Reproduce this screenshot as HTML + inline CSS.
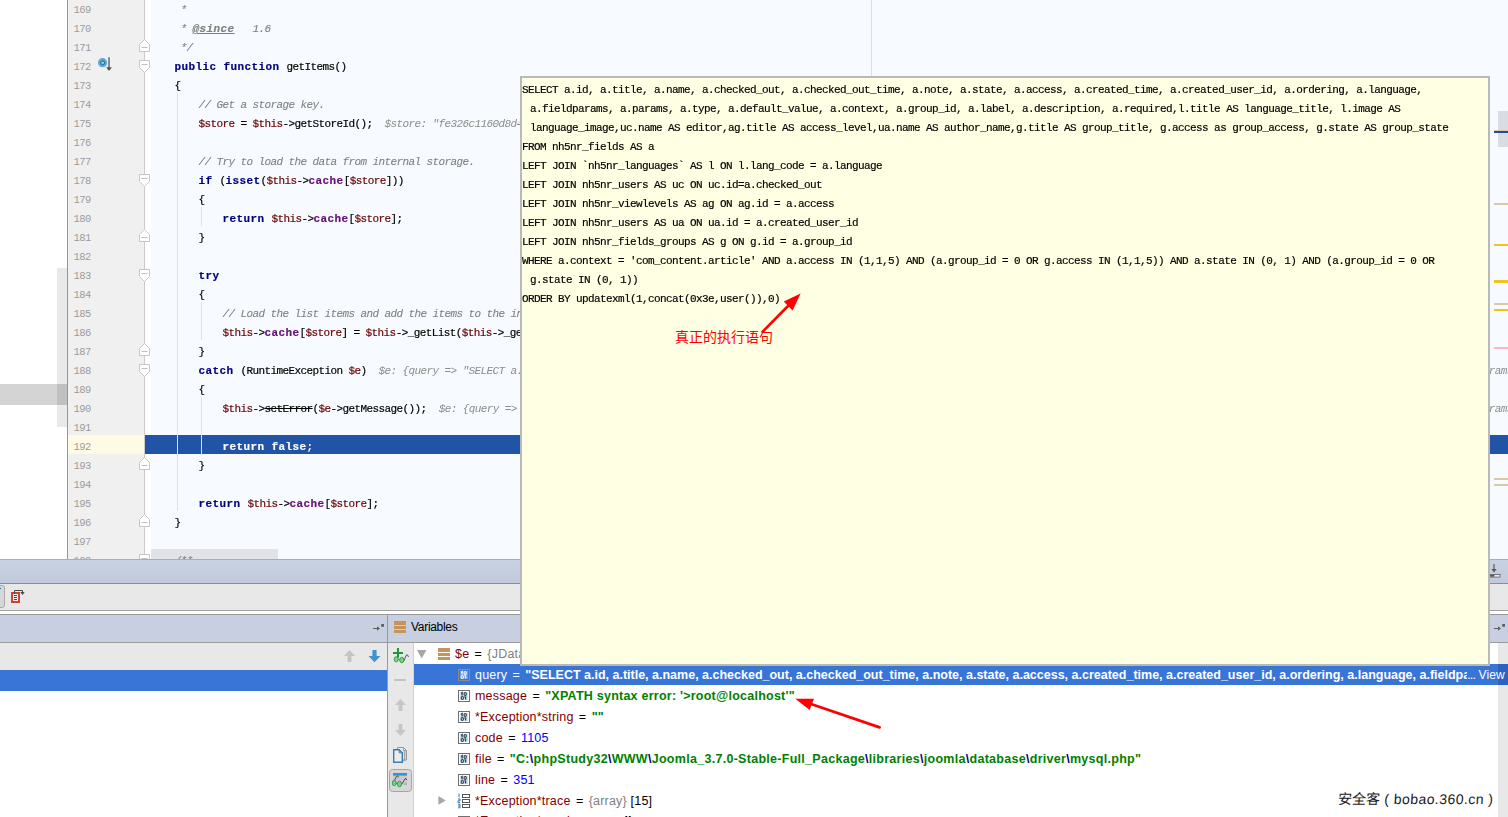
<!DOCTYPE html>
<html lang="zh">
<head>
<meta charset="utf-8">
<title>getItems() - debug</title>
<style>
html,body{margin:0;padding:0;}
body{width:1508px;height:817px;overflow:hidden;position:relative;background:#fff;font-family:"Liberation Sans","Noto Sans CJK SC",sans-serif;font-size:12px;color:#000;}
div,span,svg{box-sizing:border-box;}
.abs{position:absolute;}
/* ---------- editor ---------- */
#editor{position:absolute;left:0;top:0;width:1508px;height:559px;overflow:hidden;background:#fff;}
#edbg{position:absolute;left:151px;top:0;width:1357px;height:559px;background:#f7fafe;}
#lstrip1{position:absolute;left:57px;top:268px;width:10px;height:159px;background:#e9e9e9;}
#lstrip2{position:absolute;left:0;top:384px;width:67px;height:21px;background:#d4d4d4;}
#lstrip3{position:absolute;left:57px;top:384px;width:10px;height:21px;background:#c0c0c0;}
#gutter{position:absolute;left:67px;top:0;width:78px;height:559px;background:#f0f0f0;border-left:1px solid #969696;border-right:1px solid #cbcbcb;}
#gut192{position:absolute;left:68px;top:435px;width:76px;height:19px;background:#fffae3;}
#hl192{position:absolute;left:145px;top:435px;width:1363px;height:19px;background:#2154a6;}
#margin{position:absolute;left:871px;top:0;width:1px;height:559px;background:#dfdfdf;}
.ln{position:absolute;left:73.6px;width:30px;height:19px;line-height:19px;font-family:"Liberation Mono",monospace;font-size:10.5px;letter-spacing:-0.6px;color:#9c9c9c;}
.cl{filter:contrast(1);-webkit-text-stroke:0.18px;position:absolute;left:150.5px;height:19px;line-height:19px;white-space:pre;font-family:"Liberation Mono",monospace;font-size:11px;letter-spacing:-0.6px;color:#000;}
.k{font-weight:bold;color:#000080;letter-spacing:0.4px;}
.kw{font-weight:bold;color:#fff;letter-spacing:0.4px;}
.w{color:#fff;}
.v{color:#660000;}
.f{font-weight:bold;color:#660e7a;letter-spacing:0.4px;}
.c{font-style:italic;color:#808080;-webkit-text-stroke:0.1px;}
.h{font-style:italic;color:#8c8c8c;-webkit-text-stroke:0;}
.t{font-weight:bold;font-style:italic;text-decoration:underline;color:#808080;letter-spacing:0.4px;}
.s{text-decoration:line-through;}
.guide{position:absolute;width:1px;background:#e2e2e2;}
.stripe{position:absolute;left:1494px;width:14px;height:2px;}
#hthumb{position:absolute;left:151px;top:549px;width:127px;height:10px;background:#e1e3e8;}
#vthumb{position:absolute;left:1498px;top:111px;width:10px;height:36px;background:#d9dce3;}
/* ---------- tooltip ---------- */
#tip{position:absolute;left:520px;top:76px;width:970px;height:590px;background:#ffffe3;border:2px solid #b9b9b9;overflow:hidden;}
.q{filter:contrast(1);-webkit-text-stroke:0.18px;position:absolute;left:0px;height:19px;line-height:19px;white-space:pre;font-family:"Liberation Mono",monospace;font-size:11px;letter-spacing:-0.6px;color:#000;}
#cn{position:absolute;left:153px;top:250px;font-family:"Liberation Sans","Noto Sans CJK SC",sans-serif;font-size:14px;line-height:18px;color:#ff0000;white-space:nowrap;}
/* ---------- bottom ---------- */
#bar1{position:absolute;left:0;top:559px;width:1508px;height:25px;background:linear-gradient(#c9d2e3,#c1cadc);border-top:1px solid #a9adb6;border-bottom:1px solid #878c98;}
#bar2{position:absolute;left:0;top:584px;width:1508px;height:27px;background:#e8e8e8;border-bottom:1px solid #a0a0a0;}
#bar3{position:absolute;left:0;top:611px;width:1508px;height:3px;background:#fff;}
#hdr{position:absolute;left:0;top:614px;width:1508px;height:29px;background:#c7cfe0;border-top:1px solid #9a9a9a;border-bottom:1px solid #9a9a9a;}
#vdiv{position:absolute;left:387px;top:615px;width:1px;height:202px;background:#999;}
#ltool{position:absolute;left:0;top:643px;width:387px;height:27px;background:#e8e8e8;}
#lsel{position:absolute;left:0;top:670px;width:387px;height:21px;background:#3875d7;}
#rtool{position:absolute;left:388px;top:643px;width:26px;height:174px;background:#e8e8e8;border-right:1px solid #d0d0d0;}
#rsel{position:absolute;left:414px;top:664px;width:1094px;height:21px;background:#3875d7;}
#rscroll{position:absolute;left:1498px;top:643px;width:10px;height:174px;background:#e8e8e8;}
#rscrollsel{position:absolute;left:1498px;top:664px;width:10px;height:21px;background:#2f62c0;}
.row{position:absolute;left:475px;height:21px;line-height:21px;margin-top:1px;white-space:pre;font-size:12.5px;letter-spacing:0.2px;color:#000;}
.n{color:#800000;}
.eq{word-spacing:1.6px;}
.g{color:#808080;}
.str{color:#008000;font-weight:bold;letter-spacing:0.27px;}
.esc{color:#000080;font-weight:bold;}
.num{color:#0000ff;}
.sel,.sel span{color:#fff;}
.sel b{letter-spacing:0.27px;}
#wm{position:absolute;left:1338px;top:789px;font-family:"Liberation Sans","Noto Sans CJK SC",sans-serif;font-size:14px;line-height:20px;color:#1a1a1a;white-space:nowrap;text-shadow:-1px -1px 0 #fff;transform:skewX(-4deg);transform-origin:0 50%;}
#wml{letter-spacing:0.45px;}
</style>
</head>
<body>
<div id="editor">
<div id="edbg"></div>
<div id="lstrip1"></div><div id="lstrip2"></div><div id="lstrip3"></div>
<div id="margin"></div>
<div id="gutter"></div>
<div id="gut192"></div>
<div id="hl192"></div>
<div class="guide" style="left:177px;top:93px;height:418px"></div>
<div class="guide" style="left:201px;top:207px;height:19px"></div>
<div class="guide" style="left:201px;top:302px;height:38px"></div>
<div class="guide" style="left:201px;top:397px;height:57px"></div>
<div id="hthumb"></div>
<div class="ln" style="top:1px">169</div>
<div class="ln" style="top:20px">170</div>
<div class="ln" style="top:39px">171</div>
<div class="ln" style="top:58px">172</div>
<div class="ln" style="top:77px">173</div>
<div class="ln" style="top:96px">174</div>
<div class="ln" style="top:115px">175</div>
<div class="ln" style="top:134px">176</div>
<div class="ln" style="top:153px">177</div>
<div class="ln" style="top:172px">178</div>
<div class="ln" style="top:191px">179</div>
<div class="ln" style="top:210px">180</div>
<div class="ln" style="top:229px">181</div>
<div class="ln" style="top:248px">182</div>
<div class="ln" style="top:267px">183</div>
<div class="ln" style="top:286px">184</div>
<div class="ln" style="top:305px">185</div>
<div class="ln" style="top:324px">186</div>
<div class="ln" style="top:343px">187</div>
<div class="ln" style="top:362px">188</div>
<div class="ln" style="top:381px">189</div>
<div class="ln" style="top:400px">190</div>
<div class="ln" style="top:419px">191</div>
<div class="ln" style="top:438px">192</div>
<div class="ln" style="top:457px">193</div>
<div class="ln" style="top:476px">194</div>
<div class="ln" style="top:495px">195</div>
<div class="ln" style="top:514px">196</div>
<div class="ln" style="top:533px">197</div>
<div class="ln" style="top:552px">198</div>
<div class="cl" style="top:1px">     <span class="c">*</span></div>
<div class="cl" style="top:20px">     <span class="c">* </span><span class="t">@since</span><span class="c">   1.6</span></div>
<div class="cl" style="top:39px">     <span class="c">*/</span></div>
<div class="cl" style="top:58px">    <span class="k">public function </span>getItems()</div>
<div class="cl" style="top:77px">    {</div>
<div class="cl" style="top:96px">        <span class="c">// Get a storage key.</span></div>
<div class="cl" style="top:115px">        <span class="v">$store</span> = <span class="v">$this</span>-&gt;getStoreId();  <span class="h">$store: "fe326c1160d8d4f5c8a1e6b2d7a90c43"</span></div>
<div class="cl" style="top:153px">        <span class="c">// Try to load the data from internal storage.</span></div>
<div class="cl" style="top:172px">        <span class="k">if </span>(<span class="k">isset</span>(<span class="v">$this</span>-&gt;<span class="f">cache</span>[<span class="v">$store</span>]))</div>
<div class="cl" style="top:191px">        {</div>
<div class="cl" style="top:210px">            <span class="k">return </span><span class="v">$this</span>-&gt;<span class="f">cache</span>[<span class="v">$store</span>];</div>
<div class="cl" style="top:229px">        }</div>
<div class="cl" style="top:267px">        <span class="k">try</span></div>
<div class="cl" style="top:286px">        {</div>
<div class="cl" style="top:305px">            <span class="c">// Load the list items and add the items to the internal cache.</span></div>
<div class="cl" style="top:324px">            <span class="v">$this</span>-&gt;<span class="f">cache</span>[<span class="v">$store</span>] = <span class="v">$this</span>-&gt;_getList(<span class="v">$this</span>-&gt;_getListQuery(), <span class="v">$this</span>-&gt;getStart(), <span class="v">$this</span>-&gt;getState('list.limit'));</div>
<div class="cl" style="top:343px">        }</div>
<div class="cl" style="top:362px">        <span class="k">catch </span>(RuntimeException <span class="v">$e</span>)  <span class="h">$e: {query =&gt; "SELECT a.id, a.title, a.name, a.checked_out, a.checked_out_time, a.note, a.state, a.access, a.created_time, a.created_user_id, a.ordering, a.language, a.fieldparams, a.params, a.type, a.default_value, a.fieldparams, a.param</span></div>
<div class="cl" style="top:381px">        {</div>
<div class="cl" style="top:400px">            <span class="v">$this</span>-&gt;<span class="s">setError</span>(<span class="v">$e</span>-&gt;getMessage());  <span class="h">$e: {query =&gt; "SELECT a.id, a.title, a.name, a.checked_out, a.checked_out_time, a.note, a.state, a.access, a.created_time, a.created_user_id, a.ordering, a.language, a.fieldparams, a.param</span></div>
<div class="cl" style="top:438px">            <span class="kw">return false</span><span class="w">;</span></div>
<div class="cl" style="top:457px">        }</div>
<div class="cl" style="top:495px">        <span class="k">return </span><span class="v">$this</span>-&gt;<span class="f">cache</span>[<span class="v">$store</span>];</div>
<div class="cl" style="top:514px">    }</div>
<div class="cl" style="top:552px">    <span class="c">/**</span></div>
<svg class="abs" style="left:139px;top:39px" width="11" height="13" viewBox="0 0 11 13"><path d="M0.5 12.5V5.5L5.5 0.5L10.5 5.5V12.5Z" fill="#fff" stroke="#c6c6c6"/><path d="M2.5 8.5H8.5" stroke="#c0c0c0"/></svg>
<svg class="abs" style="left:139px;top:229px" width="11" height="13" viewBox="0 0 11 13"><path d="M0.5 12.5V5.5L5.5 0.5L10.5 5.5V12.5Z" fill="#fff" stroke="#c6c6c6"/><path d="M2.5 8.5H8.5" stroke="#c0c0c0"/></svg>
<svg class="abs" style="left:139px;top:343px" width="11" height="13" viewBox="0 0 11 13"><path d="M0.5 12.5V5.5L5.5 0.5L10.5 5.5V12.5Z" fill="#fff" stroke="#c6c6c6"/><path d="M2.5 8.5H8.5" stroke="#c0c0c0"/></svg>
<svg class="abs" style="left:139px;top:457px" width="11" height="13" viewBox="0 0 11 13"><path d="M0.5 12.5V5.5L5.5 0.5L10.5 5.5V12.5Z" fill="#fff" stroke="#c6c6c6"/><path d="M2.5 8.5H8.5" stroke="#c0c0c0"/></svg>
<svg class="abs" style="left:139px;top:514px" width="11" height="13" viewBox="0 0 11 13"><path d="M0.5 12.5V5.5L5.5 0.5L10.5 5.5V12.5Z" fill="#fff" stroke="#c6c6c6"/><path d="M2.5 8.5H8.5" stroke="#c0c0c0"/></svg>
<svg class="abs" style="left:139px;top:60px" width="11" height="13" viewBox="0 0 11 13"><path d="M0.5 0.5V7.5L5.5 12.5L10.5 7.5V0.5Z" fill="#fff" stroke="#c6c6c6"/><path d="M2.5 4.5H8.5" stroke="#c0c0c0"/></svg>
<svg class="abs" style="left:139px;top:174px" width="11" height="13" viewBox="0 0 11 13"><path d="M0.5 0.5V7.5L5.5 12.5L10.5 7.5V0.5Z" fill="#fff" stroke="#c6c6c6"/><path d="M2.5 4.5H8.5" stroke="#c0c0c0"/></svg>
<svg class="abs" style="left:139px;top:269px" width="11" height="13" viewBox="0 0 11 13"><path d="M0.5 0.5V7.5L5.5 12.5L10.5 7.5V0.5Z" fill="#fff" stroke="#c6c6c6"/><path d="M2.5 4.5H8.5" stroke="#c0c0c0"/></svg>
<svg class="abs" style="left:139px;top:364px" width="11" height="13" viewBox="0 0 11 13"><path d="M0.5 0.5V7.5L5.5 12.5L10.5 7.5V0.5Z" fill="#fff" stroke="#c6c6c6"/><path d="M2.5 4.5H8.5" stroke="#c0c0c0"/></svg>
<svg class="abs" style="left:139px;top:554px" width="11" height="13" viewBox="0 0 11 13"><path d="M0.5 0.5V7.5L5.5 12.5L10.5 7.5V0.5Z" fill="#fff" stroke="#c6c6c6"/><path d="M2.5 4.5H8.5" stroke="#c0c0c0"/></svg>
<div id="vthumb"></div>
<div class="stripe" style="top:130px;height:1px;background:#d9c9a6"></div>
<div class="stripe" style="top:131px;background:#1f4e9e"></div>
<div class="stripe" style="top:203px;background:#d9c9a6"></div>
<div class="stripe" style="top:244px;background:#f0c419"></div>
<div class="stripe" style="top:280px;height:3px;background:#f0c419"></div>
<div class="stripe" style="top:303px;background:#d9c9a6"></div>
<div class="stripe" style="top:309px;background:#f0c419"></div>
<div class="stripe" style="top:347px;background:#ffb6c1"></div>
<div class="stripe" style="top:478px;background:#d9c9a6"></div>
<div class="stripe" style="top:484px;background:#d9c9a6"></div>
</div>

<div id="bar1"></div>
<div id="bar2"></div>
<div id="bar3"></div>
<div id="hdr"></div>
<div id="ltool"></div>
<div id="lsel"></div>
<div id="rtool"></div>
<div id="rsel"></div>
<div id="rscroll"></div>
<div id="rscrollsel"></div>
<div id="vdiv"></div>
<div class="abs" id="vars" style="left:411px;top:617px;height:21px;line-height:21px;font-size:12px;letter-spacing:-0.3px;">Variables</div>
<svg class="abs" style="left:97px;top:56px" width="16" height="16" viewBox="0 0 16 16"><circle cx="5.6" cy="6.7" r="4.6" fill="#56abe0"/><circle cx="5.6" cy="6.8" r="1.4" fill="#8fd0f7"/><circle cx="5.6" cy="6.8" r="2" fill="none" stroke="#4a5f70" stroke-width="1"/><path d="M12 1.2V13" stroke="#555" stroke-width="1.3" fill="none"/><path d="M9.1 11.2L12 14.9L14.9 11.2Z" fill="#555"/></svg>
<svg class="abs" style="left:1488px;top:562.5px" width="14" height="16" viewBox="0 0 14 16"><path d="M6 1V8" stroke="#5a5a5a" stroke-width="1.2"/><path d="M3.4 6L6 9.4L8.6 6Z" fill="#5a5a5a"/><rect x="1" y="11.5" width="11" height="2.6" fill="#eee" stroke="#5a5a5a" stroke-width="0.8"/><rect x="1.4" y="11.9" width="5" height="1.8" fill="#5a5a5a"/></svg>
<div class="abs" style="left:-8px;top:585px;width:13px;height:23px;border:1px solid #a9a9a9;border-radius:3px;background:#d7d7d7;"></div>
<div class="abs" style="left:0;top:588px;width:1px;height:1px;background:#1a6fa8;"></div>
<svg class="abs" style="left:10px;top:588px" width="18" height="18" viewBox="0 0 18 18"><rect x="2" y="5" width="7" height="9" fill="#f3f3f3" stroke="#cb4334" stroke-width="2"/><path d="M4 7.5H7M4 9.5H7M4 11.5H7" stroke="#444" stroke-width="1"/><path d="M4.5 6V2.5H12.5V4.2" stroke="#4a4a4a" stroke-width="1" fill="none"/><rect x="3.4" y="4" width="2.2" height="2" fill="#e8e8e8" opacity="0"/><path d="M10.3 4L12.5 7L14.7 4Z" fill="#4a4a4a"/></svg>
<svg class="abs" style="left:372px;top:622px" width="13" height="11" viewBox="0 0 13 11"><path d="M1 6.5H7" stroke="#5f5f5f" stroke-width="1"/><path d="M5 4.2L8 6.5L5 8.8Z" fill="#5f5f5f"/><rect x="9.2" y="2" width="2.8" height="2.8" fill="#5f5f5f"/></svg>
<svg class="abs" style="left:1493px;top:622px" width="13" height="11" viewBox="0 0 13 11"><path d="M1 6.5H7" stroke="#5f5f5f" stroke-width="1"/><path d="M5 4.2L8 6.5L5 8.8Z" fill="#5f5f5f"/><rect x="9.2" y="2" width="2.8" height="2.8" fill="#5f5f5f"/></svg>
<svg class="abs" style="left:343px;top:649px" width="13" height="14" viewBox="0 0 13 14"><path d="M6.5 1L12 7H8.4V13H4.6V7H1Z" fill="#c3c3c3"/></svg>
<svg class="abs" style="left:367.6px;top:649px" width="14" height="14" viewBox="0 0 14 14"><path d="M6.5 13.2L12.5 7H8.6V1H4.4V7H0.5Z" fill="#3d94d1"/></svg>
<svg class="abs" style="left:394px;top:621px" width="12" height="13" viewBox="0 0 12 13"><rect x="0" y="0" width="12" height="4" fill="#c4955a"/><rect x="0" y="5" width="12" height="3" fill="#c4955a"/><rect x="0" y="9" width="12" height="3" fill="#c4955a"/></svg>
<svg class="abs" style="left:392px;top:647px" width="18" height="18" viewBox="0 0 18 18"><path d="M6 1V10.8M1 6H11" stroke="#1c9636" stroke-width="2"/><ellipse cx="4.2" cy="12.3" rx="2" ry="2.6" fill="#7fd08a" stroke="#2a9a44" stroke-width="0.9"/><ellipse cx="9.8" cy="13" rx="2.1" ry="2.8" fill="#7fd08a" stroke="#2a9a44" stroke-width="0.9"/><path d="M6.2 12.6H7.6" stroke="#2a9a44" stroke-width="1"/><path d="M12.1 13.6L14.2 8.2Q15.6 6.6 16.5 10" stroke="#4a4a4a" stroke-width="0.9" fill="none"/></svg>
<div class="abs" style="left:394px;top:679px;width:12px;height:2px;background:#c4c4c4;"></div>
<svg class="abs" style="left:394px;top:698px" width="13" height="14" viewBox="0 0 13 14"><path d="M6.5 1L12 7H8.4V13H4.6V7H1Z" fill="#c6c6c6"/></svg>
<svg class="abs" style="left:394px;top:723px" width="13" height="14" viewBox="0 0 13 14"><path d="M6.5 13L12 7H8.4V1H4.6V7H1Z" fill="#c6c6c6"/></svg>
<svg class="abs" style="left:392px;top:746px" width="17" height="18" viewBox="0 0 17 18"><path d="M5.5 1.5H11.5L14.5 4.5V14H5.5Z" fill="#ededed" stroke="#9a9a9a" stroke-width="1"/><path d="M11.5 1.5V4.5H14.5" fill="none" stroke="#9a9a9a" stroke-width="1"/><path d="M12.6 5V14.4H10.6" fill="none" stroke="#a8a8a8" stroke-width="1.6"/><path d="M1.7 3.7H7.2L10.3 6.8V16.3H1.7Z" fill="#ececec" stroke="#3a7db1" stroke-width="1.4"/><path d="M7.2 3.7V6.8H10.3" fill="none" stroke="#3a7db1" stroke-width="1"/></svg>
<div class="abs" style="left:389px;top:769px;width:23px;height:23px;border:1px solid #a6a6a6;border-radius:3.5px;background:#d6d6d6;"></div>
<svg class="abs" style="left:391px;top:771px" width="18" height="18" viewBox="0 0 18 18"><rect x="2" y="4.4" width="14" height="9.6" fill="#c9c9c9"/><rect x="2" y="2" width="14" height="2.6" fill="#3a8fd0"/><rect x="13.4" y="12" width="2.6" height="2" fill="#b0b0b0"/><path d="M3.6 9.2L5.6 5.2Q6.8 4 7.6 6.4" stroke="#444" stroke-width="0.9" fill="none"/><path d="M11 13L14 7.8Q15.2 6.8 15.8 9" stroke="#444" stroke-width="0.9" fill="none"/><ellipse cx="3.2" cy="12" rx="1.9" ry="2.8" fill="#7fd08a" stroke="#2a9a44" stroke-width="0.9"/><ellipse cx="8.5" cy="13" rx="2" ry="2.8" fill="#7fd08a" stroke="#2a9a44" stroke-width="0.9"/><path d="M5.1 12.4H6.5" stroke="#2a9a44" stroke-width="1"/></svg>
<svg class="abs" style="left:417px;top:650px" width="10" height="9" viewBox="0 0 10 9"><path d="M0 0H9.4L4.7 8.4Z" fill="#a6a6a6"/></svg>
<svg class="abs" style="left:438px;top:648px" width="12" height="13" viewBox="0 0 12 13"><rect x="0" y="0" width="12" height="4" fill="#c4955a"/><rect x="0" y="5" width="12" height="3" fill="#c4955a"/><rect x="0" y="9" width="12" height="3" fill="#c4955a"/></svg>
<svg class="abs" style="left:458px;top:669px" width="12" height="12" viewBox="0 0 12 12"><rect x="0.5" y="0.5" width="11" height="11" fill="#3b76d6" stroke="#8c8c8c"/><rect x="2" y="2" width="8" height="8" fill="#6c9ce6"/><path d="M3 3.4L4.1 2.5V5.6M7.6 6.4V9.6M6.5 7.3L7.6 6.4" stroke="#f4f8ff" stroke-width="1.25" fill="none"/><ellipse cx="7.2" cy="4" rx="1.15" ry="1.5" fill="none" stroke="#f4f8ff" stroke-width="1.15"/><ellipse cx="4.3" cy="8" rx="1.15" ry="1.5" fill="none" stroke="#f4f8ff" stroke-width="1.15"/></svg>
<svg class="abs" style="left:458px;top:690px" width="12" height="12" viewBox="0 0 12 12"><rect x="0.5" y="0.5" width="11" height="11" fill="#ffffff" stroke="#707070"/><rect x="2" y="2" width="8" height="8" fill="#c6e5fb"/><path d="M3 3.4L4.1 2.5V5.6M7.6 6.4V9.6M6.5 7.3L7.6 6.4" stroke="#3e3e3e" stroke-width="1.25" fill="none"/><ellipse cx="7.2" cy="4" rx="1.15" ry="1.5" fill="none" stroke="#3e3e3e" stroke-width="1.15"/><ellipse cx="4.3" cy="8" rx="1.15" ry="1.5" fill="none" stroke="#3e3e3e" stroke-width="1.15"/></svg>
<svg class="abs" style="left:458px;top:711px" width="12" height="12" viewBox="0 0 12 12"><rect x="0.5" y="0.5" width="11" height="11" fill="#ffffff" stroke="#707070"/><rect x="2" y="2" width="8" height="8" fill="#c6e5fb"/><path d="M3 3.4L4.1 2.5V5.6M7.6 6.4V9.6M6.5 7.3L7.6 6.4" stroke="#3e3e3e" stroke-width="1.25" fill="none"/><ellipse cx="7.2" cy="4" rx="1.15" ry="1.5" fill="none" stroke="#3e3e3e" stroke-width="1.15"/><ellipse cx="4.3" cy="8" rx="1.15" ry="1.5" fill="none" stroke="#3e3e3e" stroke-width="1.15"/></svg>
<svg class="abs" style="left:458px;top:732px" width="12" height="12" viewBox="0 0 12 12"><rect x="0.5" y="0.5" width="11" height="11" fill="#ffffff" stroke="#707070"/><rect x="2" y="2" width="8" height="8" fill="#c6e5fb"/><path d="M3 3.4L4.1 2.5V5.6M7.6 6.4V9.6M6.5 7.3L7.6 6.4" stroke="#3e3e3e" stroke-width="1.25" fill="none"/><ellipse cx="7.2" cy="4" rx="1.15" ry="1.5" fill="none" stroke="#3e3e3e" stroke-width="1.15"/><ellipse cx="4.3" cy="8" rx="1.15" ry="1.5" fill="none" stroke="#3e3e3e" stroke-width="1.15"/></svg>
<svg class="abs" style="left:458px;top:753px" width="12" height="12" viewBox="0 0 12 12"><rect x="0.5" y="0.5" width="11" height="11" fill="#ffffff" stroke="#707070"/><rect x="2" y="2" width="8" height="8" fill="#c6e5fb"/><path d="M3 3.4L4.1 2.5V5.6M7.6 6.4V9.6M6.5 7.3L7.6 6.4" stroke="#3e3e3e" stroke-width="1.25" fill="none"/><ellipse cx="7.2" cy="4" rx="1.15" ry="1.5" fill="none" stroke="#3e3e3e" stroke-width="1.15"/><ellipse cx="4.3" cy="8" rx="1.15" ry="1.5" fill="none" stroke="#3e3e3e" stroke-width="1.15"/></svg>
<svg class="abs" style="left:458px;top:774px" width="12" height="12" viewBox="0 0 12 12"><rect x="0.5" y="0.5" width="11" height="11" fill="#ffffff" stroke="#707070"/><rect x="2" y="2" width="8" height="8" fill="#c6e5fb"/><path d="M3 3.4L4.1 2.5V5.6M7.6 6.4V9.6M6.5 7.3L7.6 6.4" stroke="#3e3e3e" stroke-width="1.25" fill="none"/><ellipse cx="7.2" cy="4" rx="1.15" ry="1.5" fill="none" stroke="#3e3e3e" stroke-width="1.15"/><ellipse cx="4.3" cy="8" rx="1.15" ry="1.5" fill="none" stroke="#3e3e3e" stroke-width="1.15"/></svg>
<svg class="abs" style="left:458px;top:816px" width="12" height="12" viewBox="0 0 12 12"><rect x="0.5" y="0.5" width="11" height="11" fill="#ffffff" stroke="#707070"/><rect x="2" y="2" width="8" height="8" fill="#c6e5fb"/><path d="M3 3.4L4.1 2.5V5.6M7.6 6.4V9.6M6.5 7.3L7.6 6.4" stroke="#3e3e3e" stroke-width="1.25" fill="none"/><ellipse cx="7.2" cy="4" rx="1.15" ry="1.5" fill="none" stroke="#3e3e3e" stroke-width="1.15"/><ellipse cx="4.3" cy="8" rx="1.15" ry="1.5" fill="none" stroke="#3e3e3e" stroke-width="1.15"/></svg>
<svg class="abs" style="left:438px;top:796px" width="9" height="10" viewBox="0 0 9 10"><path d="M0.4 0L7.8 4.4L0.4 8.8Z" fill="#a6a6a6"/></svg>
<svg class="abs" style="left:457px;top:793px" width="14" height="16" viewBox="0 0 14 16"><rect x="5.5" y="1.5" width="7" height="3" fill="#fff" stroke="#555" stroke-width="1"/><rect x="5.5" y="6.5" width="7" height="3" fill="#fff" stroke="#555" stroke-width="1"/><rect x="5.5" y="11.5" width="7" height="3" fill="#fff" stroke="#555" stroke-width="1"/><path d="M2 0.6V4.4M1 6H3V7.8H1V9.6H3M1 11.2H3V14.8H1M1 13H3" stroke="#2a6aa0" stroke-width="0.9" fill="none"/></svg>

<div class="row" style="left:455px;top:643px"><span class="n">$e</span><span class="eq"> = </span><span class="g">{JDatabaseExceptionExecuting} [8]</span></div>
<div class="row sel" style="top:664px"><span>query</span><span class="eq"> = </span><b id="qs" style="letter-spacing:-0.002px">"SELECT a.id, a.title, a.name, a.checked_out, a.checked_out_time, a.note, a.state, a.access, a.created_time, a.created_user_id, a.ordering, a.language, a.fieldp</b><b style="display:inline-block;vertical-align:top;width:4px;overflow:hidden">a</b><span style="letter-spacing:-0.9px">...</span></div>
<div class="row sel" style="left:1478.5px;top:664px;font-size:12px;letter-spacing:0.1px"><span>View</span></div>
<div class="row" style="top:685px"><span class="n">message</span><span class="eq"> = </span><span class="str" id="ms" style="letter-spacing:0.24px">"XPATH syntax error: '&gt;root@localhost'"</span></div>
<div class="row" style="top:706px"><span class="n">*Exception*string</span><span class="eq"> = </span><span class="str">""</span></div>
<div class="row" style="top:727px"><span class="n">code</span><span class="eq"> = </span><span class="num">1105</span></div>
<div class="row" style="top:748px"><span class="n">file</span><span class="eq"> = </span><span class="str" id="fs" style="letter-spacing:0.283px">"C:<span class="esc">\</span>phpStudy32<span class="esc">\</span>WWW<span class="esc">\</span>Joomla_3.7.0-Stable-Full_Package<span class="esc">\</span>libraries<span class="esc">\</span>joomla<span class="esc">\</span>database<span class="esc">\</span>driver<span class="esc">\</span>mysql.php"</span></div>
<div class="row" style="top:769px"><span class="n">line</span><span class="eq"> = </span><span class="num">351</span></div>
<div class="row" style="top:790px"><span class="n">*Exception*trace</span><span class="eq"> = </span><span class="g">{array}</span> [15]</div>
<div class="row" style="top:810px"><span class="n">*Exception*previous</span><span class="eq"> = </span><b>null</b></div>

<div id="tip">
<div class="q" style="top:3px">SELECT a.id, a.title, a.name, a.checked_out, a.checked_out_time, a.note, a.state, a.access, a.created_time, a.created_user_id, a.ordering, a.language,</div>
<div class="q" style="top:22px;padding-left:2px"> a.fieldparams, a.params, a.type, a.default_value, a.context, a.group_id, a.label, a.description, a.required,l.title AS language_title, l.image AS</div>
<div class="q" style="top:41px;padding-left:2px"> language_image,uc.name AS editor,ag.title AS access_level,ua.name AS author_name,g.title AS group_title, g.access as group_access, g.state AS group_state</div>
<div class="q" style="top:60px">FROM nh5nr_fields AS a</div>
<div class="q" style="top:79px">LEFT JOIN `nh5nr_languages` AS l ON l.lang_code = a.language</div>
<div class="q" style="top:98px">LEFT JOIN nh5nr_users AS uc ON uc.id=a.checked_out</div>
<div class="q" style="top:117px">LEFT JOIN nh5nr_viewlevels AS ag ON ag.id = a.access</div>
<div class="q" style="top:136px">LEFT JOIN nh5nr_users AS ua ON ua.id = a.created_user_id</div>
<div class="q" style="top:155px">LEFT JOIN nh5nr_fields_groups AS g ON g.id = a.group_id</div>
<div class="q" style="top:174px">WHERE a.context = 'com_content.article' AND a.access IN (1,1,5) AND (a.group_id = 0 OR g.access IN (1,1,5)) AND a.state IN (0, 1) AND (a.group_id = 0 OR</div>
<div class="q" style="top:193px;padding-left:2px"> g.state IN (0, 1))</div>
<div class="q" style="top:212px">ORDER BY updatexml(1,concat(0x3e,user()),0)</div>
<div id="cn">真正的执行语句</div>
<svg class="abs" style="left:230px;top:200px" width="70" height="70" viewBox="0 0 70 70"><line x1="9.8" y1="54.6" x2="37.0" y2="27.0" stroke="#ff0000" stroke-width="2.6"/><polygon points="48.6,15.6 31.8,23.6 40.6,32.4" fill="#ff0000"/></svg>
</div>
<svg class="abs" style="left:790px;top:690px" width="100" height="45" viewBox="0 0 100 45"><line x1="89.6" y1="37.4" x2="21.0" y2="14.0" stroke="#ff0000" stroke-width="2.8" stroke-linecap="round"/><polygon points="5.3,8.7 24.0,8.8 19.6,20.0" fill="#ff0000"/></svg>
<div id="wm">安全客<span id="wml"> ( bobao.360.cn )</span></div>
</body>
</html>
